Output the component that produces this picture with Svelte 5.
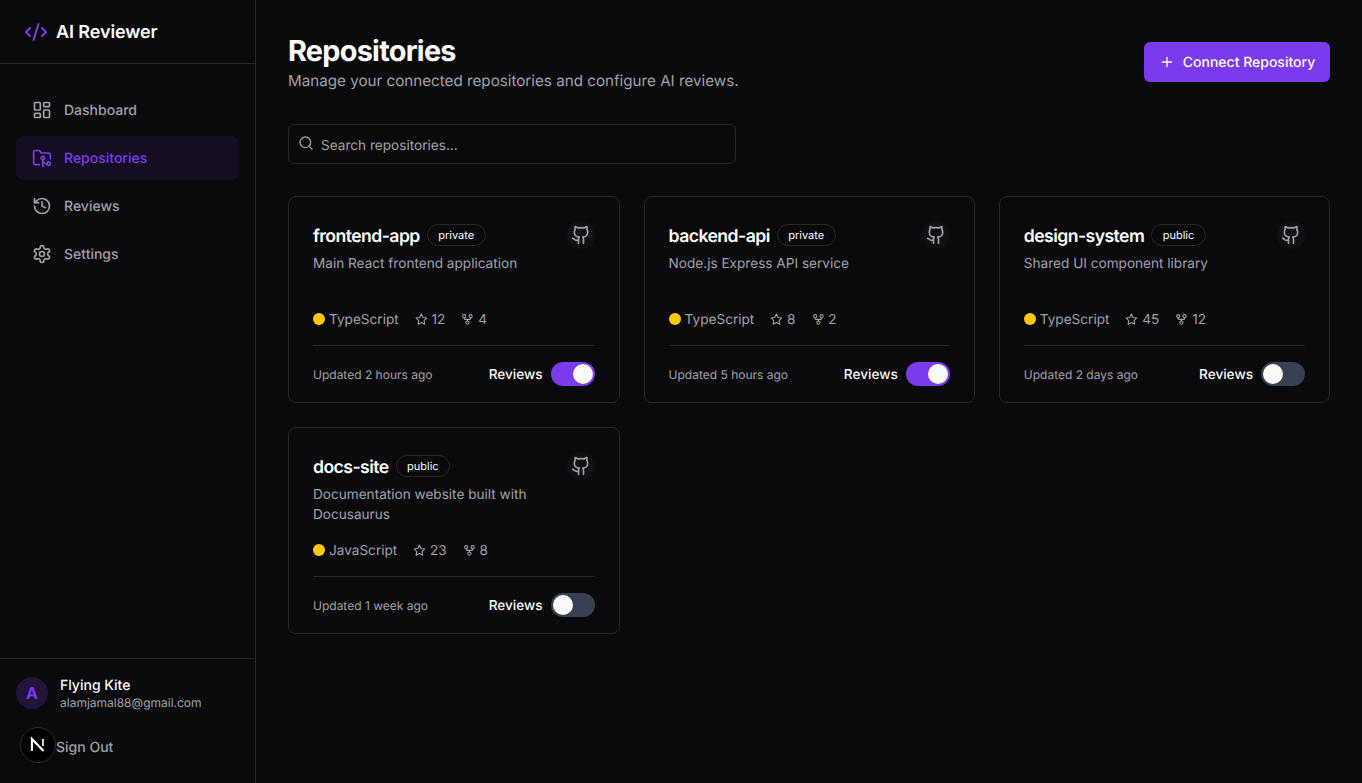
<script>
  const nav = [
    { label: 'Dashboard', icon: 'dash' },
    { label: 'Repositories', icon: 'repo', active: true },
    { label: 'Reviews', icon: 'hist' },
    { label: 'Settings', icon: 'gear' }
  ];
  const repos = [
    { name: 'frontend-app', vis: 'private', desc: 'Main React frontend application', lang: 'TypeScript', stars: 12, forks: 4, updated: 'Updated 2 hours ago', on: true },
    { name: 'backend-api', vis: 'private', desc: 'Node.js Express API service', lang: 'TypeScript', stars: 8, forks: 2, updated: 'Updated 5 hours ago', on: true },
    { name: 'design-system', vis: 'public', desc: 'Shared UI component library', lang: 'TypeScript', stars: 45, forks: 12, updated: 'Updated 2 days ago', on: false },
    { name: 'docs-site', vis: 'public', desc: 'Documentation website built with Docusaurus', lang: 'JavaScript', stars: 23, forks: 8, updated: 'Updated 1 week ago', on: false }
  ];
</script>

<div class="shell">
  <aside class="sidebar">
    <div class="brand">
      <svg class="brand-icon" viewBox="0 0 24 24"><path d="m18 16 4-4-4-4" /><path d="m6 8-4 4 4 4" /><path d="m14.5 4-5 16" /></svg>
      <span class="brand-name">AI Reviewer</span>
    </div>
    <nav class="nav">
      {#each nav as item}
        <div class="nav-item" class:active={item.active}>
          <svg class="nav-icon" viewBox="0 0 24 24">
            {#if item.icon === 'dash'}
              <rect x="3" y="3" width="7" height="9" rx="1" /><rect x="14" y="3" width="7" height="5" rx="1" /><rect x="14" y="12" width="7" height="9" rx="1" /><rect x="3" y="16" width="7" height="5" rx="1" />
            {:else if item.icon === 'repo'}
              <path d="M9 20H4a2 2 0 0 1-2-2V5a2 2 0 0 1 2-2h3.9a2 2 0 0 1 1.69.9l.81 1.2a2 2 0 0 0 1.67.9H20a2 2 0 0 1 2 2v5" /><circle cx="13" cy="12" r="2" /><path d="M18 19c-2.8 0-5-2.2-5-5v8" /><circle cx="20" cy="19" r="2" />
            {:else if item.icon === 'hist'}
              <path d="M3 12a9 9 0 1 0 9-9 9.75 9.75 0 0 0-6.74 2.74L3 8" /><path d="M3 3v5h5" /><path d="M12 7v5l4 2" />
            {:else}
              <path d="M12.22 2h-.44a2 2 0 0 0-2 2v.18a2 2 0 0 1-1 1.73l-.43.25a2 2 0 0 1-2 0l-.15-.08a2 2 0 0 0-2.73.73l-.22.38a2 2 0 0 0 .73 2.73l.15.1a2 2 0 0 1 1 1.72v.51a2 2 0 0 1-1 1.74l-.15.09a2 2 0 0 0-.73 2.73l.22.38a2 2 0 0 0 2.73.73l.15-.08a2 2 0 0 1 2 0l.43.25a2 2 0 0 1 1 1.73V20a2 2 0 0 0 2 2h.44a2 2 0 0 0 2-2v-.18a2 2 0 0 1 1-1.73l.43-.25a2 2 0 0 1 2 0l.15.08a2 2 0 0 0 2.73-.73l.22-.39a2 2 0 0 0-.73-2.73l-.15-.08a2 2 0 0 1-1-1.74v-.5a2 2 0 0 1 1-1.74l.15-.09a2 2 0 0 0 .73-2.73l-.22-.38a2 2 0 0 0-2.73-.73l-.15.08a2 2 0 0 1-2 0l-.43-.25a2 2 0 0 1-1-1.73V4a2 2 0 0 0-2-2z" /><circle cx="12" cy="12" r="3" />
            {/if}
          </svg>
          <span>{item.label}</span>
        </div>
      {/each}
    </nav>
    <div class="user-area">
      <div class="user">
        <div class="avatar">A</div>
        <div class="user-text">
          <div class="user-name">Flying Kite</div>
          <div class="user-mail">alamjamal88@gmail.com</div>
        </div>
      </div>
      <div class="signout">Sign Out</div>
    </div>
  </aside>

  <main class="main">
    <header class="head">
      <div>
        <h1>Repositories</h1>
        <p>Manage your connected repositories and configure AI reviews.</p>
      </div>
      <button class="connect">
        <svg class="plus" viewBox="0 0 24 24"><path d="M5 12h14" /><path d="M12 5v14" /></svg>
        Connect Repository
      </button>
    </header>

    <div class="search">
      <svg class="search-icon" viewBox="0 0 24 24"><circle cx="11" cy="11" r="8" /><path d="m21 21-4.3-4.3" /></svg>
      <input placeholder="Search repositories..." />
    </div>

    <section class="grid">
      {#each repos as r}
        <article class="card">
          <div class="card-top">
            <div class="title">
              <h3>{r.name}</h3>
              <span class="pill">{r.vis}</span>
            </div>
            <div class="gh">
              <svg viewBox="0 0 24 24"><path d="M15 22v-4a4.8 4.8 0 0 0-1-3.5c3 0 6-2 6-5.5.08-1.25-.27-2.48-1-3.5.28-1.15.28-2.35 0-3.5 0 0-1 0-3 1.5-2.64-.5-5.36-.5-8 0C6 2 5 2 5 2c-.3 1.15-.3 2.35 0 3.5A5.403 5.403 0 0 0 4 9c0 3.5 3 5.5 6 5.5-.39.49-.68 1.05-.85 1.65-.17.6-.22 1.23-.15 1.85v4" /><path d="M9 18c-4.51 2-5-2-7-2" /></svg>
            </div>
          </div>
          <p class="desc">{r.desc}</p>
          <div class="meta">
            <span class="lang"><i class="dot"></i><span class="t">{r.lang}</span></span>
            <span class="stat">
              <svg viewBox="0 0 24 24"><polygon points="12 2 15.09 8.26 22 9.27 17 14.14 18.18 21.02 12 17.77 5.82 21.02 7 14.14 2 9.27 8.91 8.26 12 2" /></svg><span class="t">{r.stars}</span>
            </span>
            <span class="stat">
              <svg viewBox="0 0 24 24"><circle cx="12" cy="18" r="3" /><circle cx="6" cy="6" r="3" /><circle cx="18" cy="6" r="3" /><path d="M18 9v2c0 .6-.4 1-1 1H7c-.6 0-1-.4-1-1V9" /><path d="M12 12v3" /></svg><span class="t">{r.forks}</span>
            </span>
          </div>
          <div class="foot">
            <span class="updated">{r.updated}</span>
            <div class="rev">
              <span class="t">Reviews</span>
              <span class="switch" class:on={r.on}><span class="thumb"></span></span>
            </div>
          </div>
        </article>
      {/each}
    </section>
  </main>

  <div class="dev-badge">
    <svg viewBox="0 0 20 20"><path class="n-main" d="M4.5 15.5V4.5L15 15.5" /><path class="n-side" d="M14.5 4.5V11" /></svg>
  </div>
</div>

<style>
  :global(body) {
    margin: 0;
    background: #0a0a0c;
    color: #fafafa;
    font-family: Inter, "Liberation Sans", sans-serif;
    text-rendering: geometricPrecision;
    overflow: hidden;
  }
  svg {
    fill: none;
    stroke: currentColor;
    stroke-width: 2;
    stroke-linecap: round;
    stroke-linejoin: round;
    flex: none;
    display: block;
  }
  .shell {
    display: flex;
    height: 783px;
    background: #0a0a0c;
  }
  .sidebar {
    width: 256px;
    flex: none;
    box-sizing: border-box;
    border-right: 1px solid #27272a;
    display: flex;
    flex-direction: column;
  }
  .brand {
    height: 64px;
    box-sizing: border-box;
    border-bottom: 1px solid #27272a;
    display: flex;
    align-items: center;
    gap: 8px;
    padding: 0 24px;
    font-size: 18px;
    font-weight: 600;
    color: #fff;
  }
  .brand-name {
    padding-top: 2px;
    letter-spacing: -0.1px;
  }
  .brand-icon {
    width: 24px;
    height: 24px;
    color: #7c3aed;
  }
  .nav {
    flex: 1;
    padding: 24px 16px;
    display: flex;
    flex-direction: column;
    gap: 4px;
  }
  .nav-item {
    height: 44px;
    box-sizing: border-box;
    display: flex;
    align-items: center;
    gap: 12px;
    padding: 0 16px;
    border-radius: 8px;
    font-size: 14px;
    font-weight: 450;
    color: #a1a1aa;
  }
  .nav-item.active {
    background: rgba(124, 58, 237, 0.1);
    color: #7c3aed;
  }
  .nav-icon {
    width: 20px;
    height: 20px;
  }
  .user-area {
    border-top: 1px solid #27272a;
    padding: 16px;
  }
  .user {
    display: flex;
    align-items: center;
    gap: 12px;
    margin-bottom: 16px;
  }
  .avatar {
    width: 32px;
    height: 32px;
    border-radius: 50%;
    background: rgba(124, 58, 237, 0.2);
    color: #7c3aed;
    font-size: 16px;
    font-weight: 700;
    display: flex;
    align-items: center;
    justify-content: center;
  }
  .user-name {
    font-size: 14px;
    line-height: 20px;
    font-weight: 450;
    color: #fafafa;
    padding-top: 1px;
    margin-bottom: -1px;
  }
  .user-mail {
    font-size: 12px;
    line-height: 16px;
    color: #a1a1aa;
  }
  .signout {
    height: 40px;
    display: flex;
    align-items: center;
    padding-left: 40px;
    font-size: 14px;
    font-weight: 450;
    color: #a1a1aa;
  }
  .main {
    flex: 1;
    min-width: 0;
    padding: 32px;
  }
  .head {
    display: flex;
    justify-content: space-between;
    align-items: center;
    margin-bottom: 32px;
  }
  h1 {
    margin: 0 0 -1px;
    padding-top: 1px;
    font-size: 28.8px;
    line-height: 36px;
    font-weight: 700;
    letter-spacing: -0.72px;
    color: #fff;
  }
  .head p {
    margin: 0 0 -1px;
    padding-top: 1px;
    font-size: 15.2px;
    line-height: 24px;
    color: #a1a1aa;
  }
  .connect {
    height: 40px;
    width: 186px;
    box-sizing: border-box;
    display: flex;
    align-items: center;
    justify-content: center;
    gap: 8px;
    border: 0;
    border-radius: 6px;
    background: #7c3aed;
    color: #fafafa;
    font: 450 14px Inter, sans-serif;
    text-rendering: geometricPrecision;
  }
  .plus {
    width: 16px;
    height: 16px;
  }
  .search {
    position: relative;
    width: 448px;
    margin-bottom: 32px;
  }
  .search-icon {
    position: absolute;
    left: 10px;
    top: 10.5px;
    width: 16px;
    height: 16px;
    color: #a1a1aa;
  }
  input {
    width: 100%;
    height: 40px;
    box-sizing: border-box;
    padding: 4px 12px 0 32px;
    border: 1px solid #27272a;
    border-radius: 6px;
    background: transparent;
    color: #fafafa;
    font: 400 13.6px Inter, sans-serif;
    text-rendering: geometricPrecision;
    outline: 0;
  }
  input::placeholder {
    color: #a1a1aa;
    opacity: 1;
  }
  .grid {
    display: grid;
    grid-template-columns: 331.6px 331.2px 331.2px;
    gap: 24px;
  }
  .card {
    border: 1px solid #27272a;
    border-radius: 8px;
    padding: 24px 24px 16px;
  }
  .card-top {
    display: flex;
    justify-content: space-between;
    align-items: flex-start;
  }
  .title {
    display: flex;
    align-items: center;
    gap: 7px;
    height: 28px;
  }
  h3 {
    margin: 0;
    padding-top: 3px;
    font-size: 17.6px;
    line-height: 28px;
    font-weight: 600;
    letter-spacing: -0.55px;
    color: #fff;
  }
  .pill {
    height: 22px;
    box-sizing: border-box;
    display: flex;
    align-items: center;
    padding: 0 10.5px;
    border: 1px solid #27272a;
    border-radius: 999px;
    font-size: 11px;
    font-weight: 400;
    color: #fafafa;
  }
  .gh {
    width: 28px;
    height: 28px;
    box-sizing: border-box;
    padding: 4px;
    border-radius: 50%;
    background: #101014;
    color: #a1a1aa;
  }
  .gh svg {
    width: 20px;
    height: 20px;
  }
  .desc {
    margin: 4px 0 -1px;
    padding-top: 1px;
    min-height: 40px;
    font-size: 13.6px;
    line-height: 20px;
    color: #a1a1aa;
  }
  .meta {
    display: flex;
    align-items: center;
    gap: 16px;
    margin-top: 16px;
    height: 20px;
    font-size: 13.6px;
    color: #a1a1aa;
  }
  .t {
    padding-top: 2px;
  }
  .lang, .stat {
    display: flex;
    align-items: center;
    gap: 4px;
  }
  .dot {
    width: 12px;
    height: 12px;
    border-radius: 50%;
    background: #ffc800;
  }
  .stat svg {
    width: 12.8px;
    height: 12.8px;
  }
  .foot {
    display: flex;
    justify-content: space-between;
    align-items: center;
    margin-top: 16px;
    padding-top: 16px;
    border-top: 1px solid #27272a;
  }
  .updated {
    font-size: 12px;
    color: #a1a1aa;
  }
  .rev {
    display: flex;
    align-items: center;
    gap: 8px;
    font-size: 13.6px;
    font-weight: 450;
    color: #fafafa;
  }
  .switch {
    width: 44px;
    height: 24px;
    box-sizing: border-box;
    border: 2px solid transparent;
    border-radius: 999px;
    background: #374151;
    display: flex;
  }
  .switch.on {
    background: #7c3aed;
    justify-content: flex-end;
  }
  .thumb {
    width: 20px;
    height: 20px;
    border-radius: 50%;
    background: #fafafa;
  }
  .dev-badge {
    position: fixed;
    left: 20px;
    bottom: 20px;
    width: 36px;
    height: 36px;
    box-sizing: border-box;
    border-radius: 50%;
    background: #000;
    border: 1px solid #2e2e2e;
    display: flex;
    align-items: center;
    justify-content: center;
    color: #fff;
  }
  .dev-badge svg {
    width: 22px;
    height: 22px;
    stroke-width: 2;
    stroke-linecap: butt;
    stroke-linejoin: miter;
  }
  .n-side {
    opacity: 0.8;
  }
</style>
